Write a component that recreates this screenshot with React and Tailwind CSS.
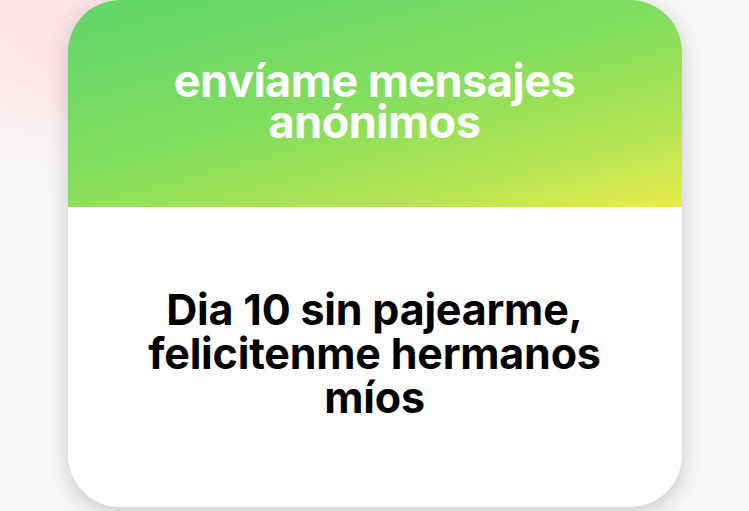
import React from 'react';

const App = () => {
  return (
    <div className="relative w-[749px] h-[511px] overflow-hidden bg-[#f7f7f8] font-['Inter','Liberation_Sans',sans-serif]">
      {/* pink glow top-left */}
      <div className="absolute -left-[60px] -top-[80px] w-[260px] h-[200px] rounded-full bg-[#ffdfe2] blur-[40px] opacity-80" />

      <div className="relative flex justify-center">
        <div className="w-[614px] h-[507px] rounded-[52px] overflow-hidden bg-white shadow-[0_6px_22px_rgba(0,0,0,0.18)] flex flex-col">
          <div className="h-[207px] shrink-0 bg-[linear-gradient(165deg,#60d66b_0%,#7fdd5e_45%,#b8e553_80%,#ebeb4b_100%)] pt-[60px]">
            <h1 className="text-white text-[45px] leading-[41px] font-bold tracking-[-0.5px] text-center">
              envíame mensajes<br />anónimos
            </h1>
          </div>
          <div className="pt-[80px]">
            <p className="text-black text-[43px] leading-[44px] font-bold tracking-[-0.2px] text-center">
              Dia 10 sin pajearme,<br />felicitenme hermanos<br />míos
            </p>
          </div>
        </div>
      </div>
    </div>
  );
};

export default App;
